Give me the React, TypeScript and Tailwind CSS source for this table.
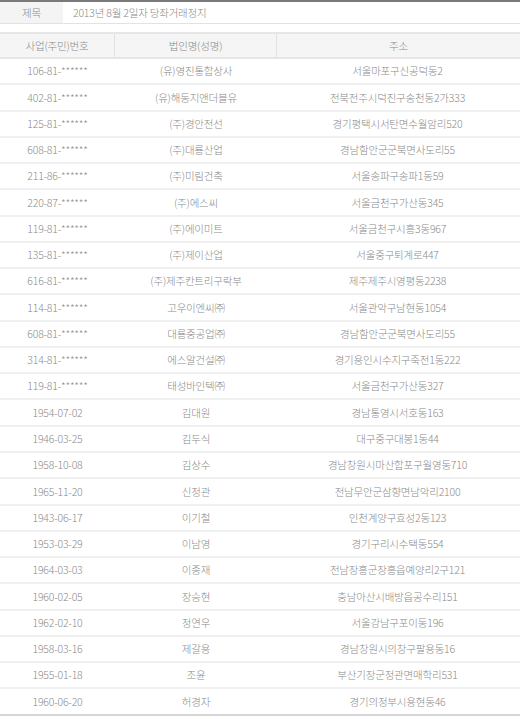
import React from 'react'

// ─────────────────────────────────────────────────
// Data
// ─────────────────────────────────────────────────

interface Row {
  no: string
  name: string
  addr: string
}

const rows: Row[] = [
  { no: '106-81-******', name: '(유)영진통합상사', addr: '서울마포구신공덕동2' },
  { no: '402-81-******', name: '(유)해동지앤더블유', addr: '전북전주시덕진구송천동2가333' },
  { no: '125-81-******', name: '(주)경안전선', addr: '경기평택시서탄면수월암리520' },
  { no: '608-81-******', name: '(주)대룡산업', addr: '경남함안군군북면사도리55' },
  { no: '211-86-******', name: '(주)미림건축', addr: '서울송파구송파1동59' },
  { no: '220-87-******', name: '(주)에스씨', addr: '서울금천구가산동345' },
  { no: '119-81-******', name: '(주)에이미트', addr: '서울금천구시흥3동967' },
  { no: '135-81-******', name: '(주)제이산업', addr: '서울중구퇴계로447' },
  { no: '616-81-******', name: '(주)제주칸트리구락부', addr: '제주제주시영평동2238' },
  { no: '114-81-******', name: '고우이엔씨㈜', addr: '서울관악구남현동1054' },
  { no: '608-81-******', name: '대룡중공업㈜', addr: '경남함안군군북면사도리55' },
  { no: '314-81-******', name: '에스알건설㈜', addr: '경기용인시수지구죽전1동222' },
  { no: '119-81-******', name: '태성바인텍㈜', addr: '서울금천구가산동327' },
  { no: '1954-07-02', name: '김대원', addr: '경남통영시서호동163' },
  { no: '1946-03-25', name: '김두식', addr: '대구중구대봉1동44' },
  { no: '1958-10-08', name: '김상수', addr: '경남창원시마산합포구월영동710' },
  { no: '1965-11-20', name: '신정관', addr: '전남무안군삼향면남악리2100' },
  { no: '1943-06-17', name: '이기철', addr: '인천계양구효성2동123' },
  { no: '1953-03-29', name: '이남영', addr: '경기구리시수택동554' },
  { no: '1964-03-03', name: '이종재', addr: '전남장흥군장흥읍예양리2구121' },
  { no: '1960-02-05', name: '장승현', addr: '충남아산시배방읍공수리151' },
  { no: '1962-02-10', name: '정연우', addr: '서울강남구포이동196' },
  { no: '1958-03-16', name: '제갈용', addr: '경남창원시의창구팔용동16' },
  { no: '1955-01-18', name: '조윤', addr: '부산기장군정관면매학리531' },
  { no: '1960-06-20', name: '허경자', addr: '경기의정부시용현동46' },
]

const font = "font-['Noto_Sans_CJK_KR','Noto_Sans',sans-serif]"

// ─────────────────────────────────────────────────
// Component
// ─────────────────────────────────────────────────

export default function App() {
  return (
    <div className={`w-[520px] h-[719px] bg-white text-[10.5px] font-light tracking-[-0.2px] text-[#8a8a8a] ${font} overflow-hidden`}>
      {/* Title */}
      <div className="flex h-[24px] border-t-2 border-t-[#7a7a7a] border-b border-b-[#e2e2e2]">
        <div className="w-[63px] bg-[#f4f4f4] flex items-center justify-center">제목</div>
        <div className="flex-1 flex items-center pl-[10px]">2013년 8월 2일자 당좌거래정지</div>
      </div>

      {/* Table header */}
      <div className="mt-[8px] grid grid-cols-[115px_162px_1fr] h-[27px] bg-[#f5f5f5] border-y-2 border-[#e6e6e6]">
        <div className="flex items-center justify-center border-r border-[#e2e2e2]">사업(주민)번호</div>
        <div className="flex items-center justify-center border-r border-[#e2e2e2]">법인명(성명)</div>
        <div className="flex items-center justify-center">주소</div>
      </div>

      {/* Body */}
      <div>
        {rows.map((r, i) => (
          <div
            key={i}
            className="grid grid-cols-[115px_162px_1fr] h-[26.28px] border-b-2 border-[#f0f0f0] last:border-[#d6d6d6]"
          >
            <div className="flex items-center justify-center">{r.no}</div>
            <div className="flex items-center justify-center">{r.name}</div>
            <div className="flex items-center justify-center pr-[2px]">{r.addr}</div>
          </div>
        ))}
      </div>
    </div>
  )
}
